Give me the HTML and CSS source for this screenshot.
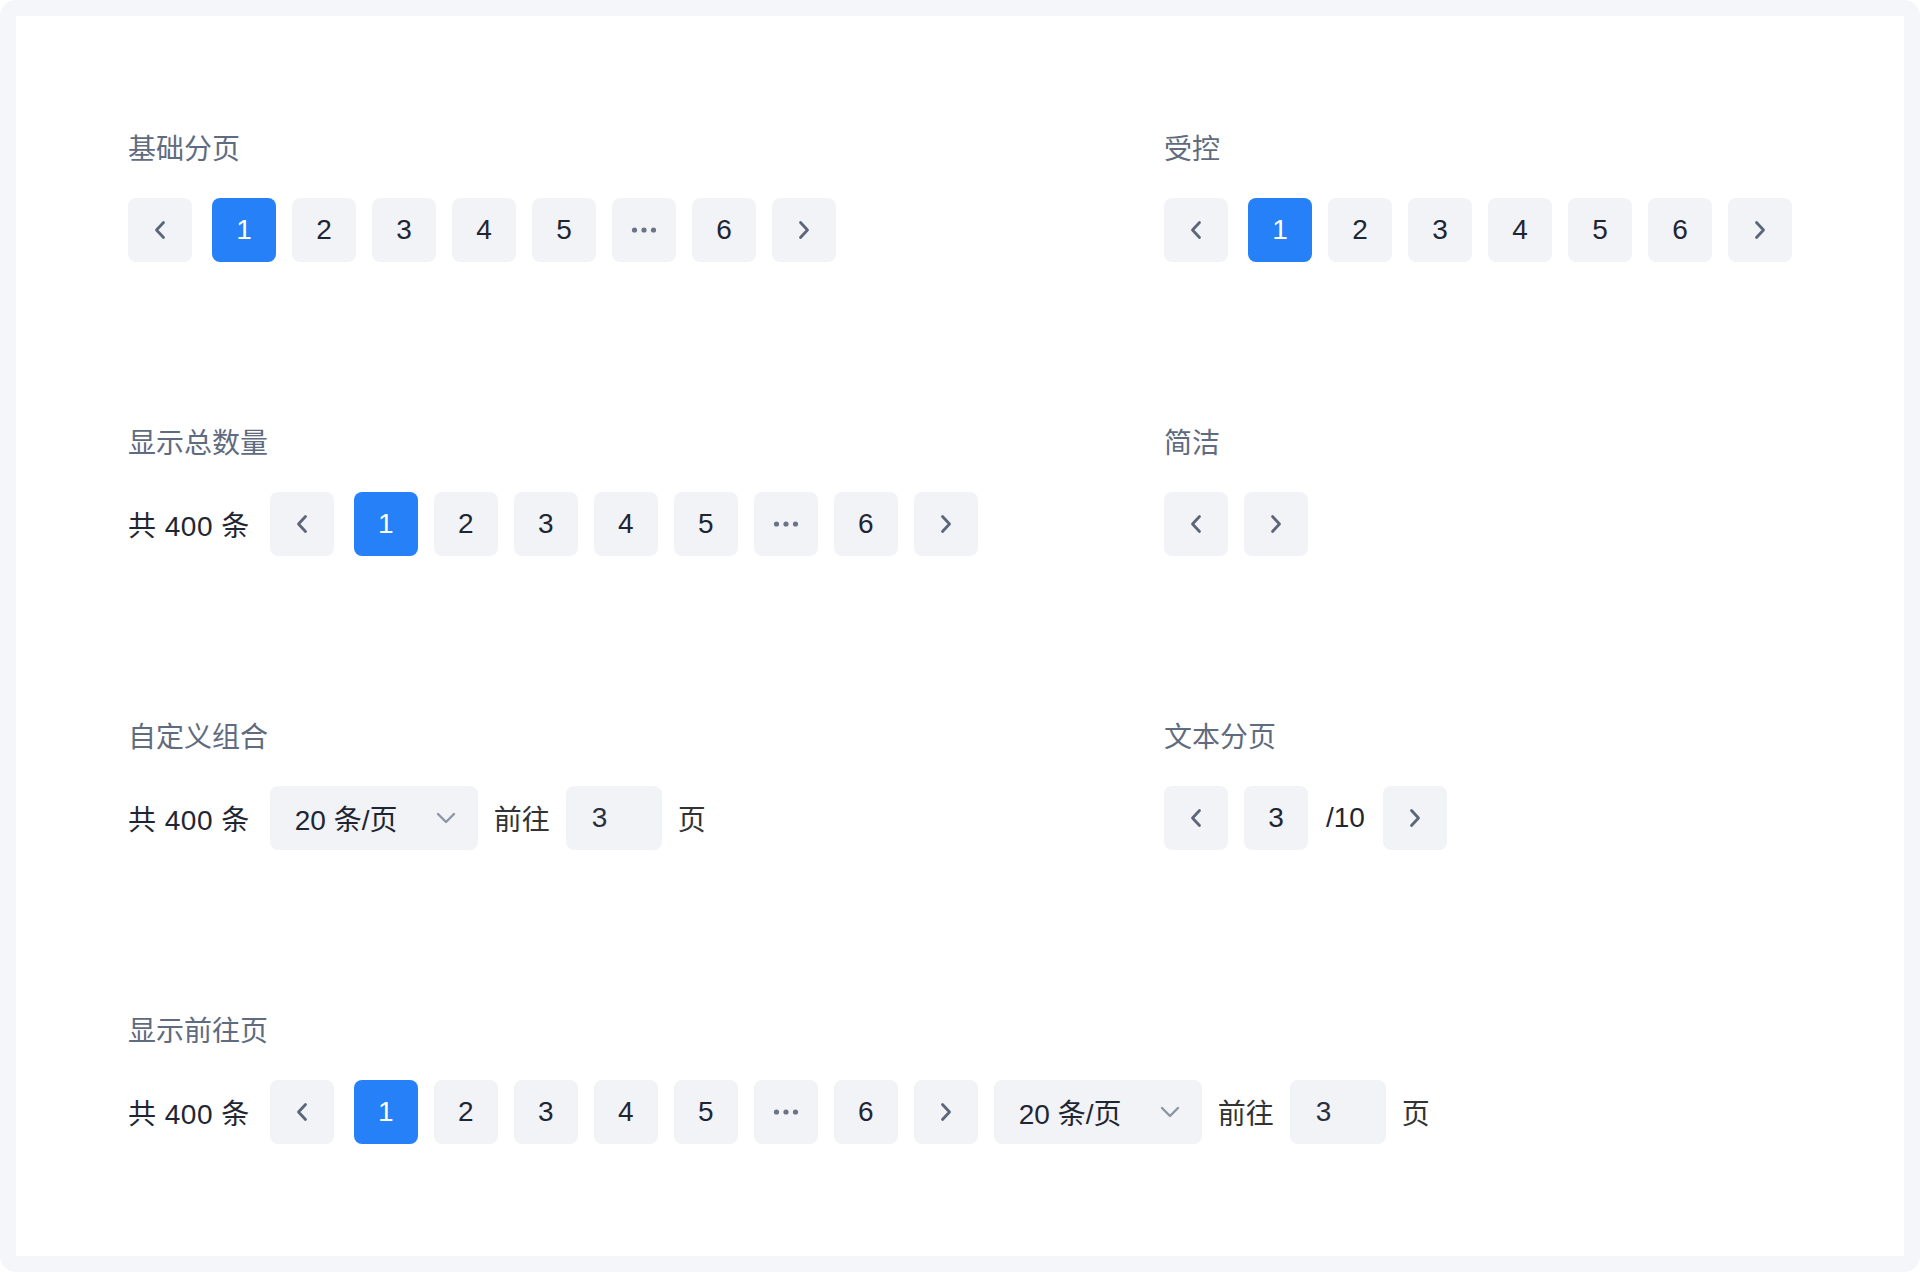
FILE: index.html
```html
<!DOCTYPE html>
<html lang="zh-CN">
<head>
<meta charset="utf-8">
<title>Pagination</title>
<link rel="stylesheet" href="styles.css">
</head>
<body>
<div class="frame">
  <div class="panel">
    <section class="demo">
      <h3 class="demo-title">基础分页</h3>
      <div class="pager">
        <button class="pg-btn pg-prev"><svg width="14" height="20" viewBox="0 0 14 20"><polyline points="10.5,2.5 3.5,10 10.5,17.5" /></svg></button>
        <button class="pg-btn active">1</button>
        <button class="pg-btn">2</button>
        <button class="pg-btn">3</button>
        <button class="pg-btn">4</button>
        <button class="pg-btn">5</button>
        <button class="pg-btn pg-more"><svg width="28" height="8" viewBox="0 0 28 8"><circle cx="4.5" cy="4" r="2.6"/><circle cx="14" cy="4" r="2.6"/><circle cx="23.5" cy="4" r="2.6"/></svg></button>
        <button class="pg-btn">6</button>
        <button class="pg-btn pg-next"><svg width="14" height="20" viewBox="0 0 14 20"><polyline points="3.5,2.5 10.5,10 3.5,17.5" /></svg></button>
      </div>
    </section>

    <section class="demo">
      <h3 class="demo-title">受控</h3>
      <div class="pager">
        <button class="pg-btn pg-prev"><svg width="14" height="20" viewBox="0 0 14 20"><polyline points="10.5,2.5 3.5,10 10.5,17.5" /></svg></button>
        <button class="pg-btn active">1</button>
        <button class="pg-btn">2</button>
        <button class="pg-btn">3</button>
        <button class="pg-btn">4</button>
        <button class="pg-btn">5</button>
        <button class="pg-btn">6</button>
        <button class="pg-btn pg-next"><svg width="14" height="20" viewBox="0 0 14 20"><polyline points="3.5,2.5 10.5,10 3.5,17.5" /></svg></button>
      </div>
    </section>

    <section class="demo">
      <h3 class="demo-title">显示总数量</h3>
      <div class="pager">
        <span class="pg-total">共 400 条</span>
        <button class="pg-btn pg-prev"><svg width="14" height="20" viewBox="0 0 14 20"><polyline points="10.5,2.5 3.5,10 10.5,17.5" /></svg></button>
        <button class="pg-btn active">1</button>
        <button class="pg-btn">2</button>
        <button class="pg-btn">3</button>
        <button class="pg-btn">4</button>
        <button class="pg-btn">5</button>
        <button class="pg-btn pg-more"><svg width="28" height="8" viewBox="0 0 28 8"><circle cx="4.5" cy="4" r="2.6"/><circle cx="14" cy="4" r="2.6"/><circle cx="23.5" cy="4" r="2.6"/></svg></button>
        <button class="pg-btn">6</button>
        <button class="pg-btn pg-next"><svg width="14" height="20" viewBox="0 0 14 20"><polyline points="3.5,2.5 10.5,10 3.5,17.5" /></svg></button>
      </div>
    </section>

    <section class="demo">
      <h3 class="demo-title">简洁</h3>
      <div class="pager">
        <button class="pg-btn pg-prev simple"><svg width="14" height="20" viewBox="0 0 14 20"><polyline points="10.5,2.5 3.5,10 10.5,17.5" /></svg></button>
        <button class="pg-btn pg-next"><svg width="14" height="20" viewBox="0 0 14 20"><polyline points="3.5,2.5 10.5,10 3.5,17.5" /></svg></button>
      </div>
    </section>

    <section class="demo">
      <h3 class="demo-title">自定义组合</h3>
      <div class="pager">
        <span class="pg-total">共 400 条</span>
        <div class="pg-select"><span>20 条/页</span><svg width="20" height="12" viewBox="0 0 20 12"><polyline points="2,2 10,10 18,2" /></svg></div>
        <span class="pg-label">前往</span>
        <div class="pg-input">3</div>
        <span class="pg-label">页</span>
      </div>
    </section>

    <section class="demo">
      <h3 class="demo-title">文本分页</h3>
      <div class="pager">
        <button class="pg-btn pg-prev simple"><svg width="14" height="20" viewBox="0 0 14 20"><polyline points="10.5,2.5 3.5,10 10.5,17.5" /></svg></button>
        <button class="pg-btn">3</button>
        <span class="pg-count">/10</span>
        <button class="pg-btn pg-next"><svg width="14" height="20" viewBox="0 0 14 20"><polyline points="3.5,2.5 10.5,10 3.5,17.5" /></svg></button>
      </div>
    </section>

    <section class="demo wide">
      <h3 class="demo-title">显示前往页</h3>
      <div class="pager">
        <span class="pg-total">共 400 条</span>
        <button class="pg-btn pg-prev"><svg width="14" height="20" viewBox="0 0 14 20"><polyline points="10.5,2.5 3.5,10 10.5,17.5" /></svg></button>
        <button class="pg-btn active">1</button>
        <button class="pg-btn">2</button>
        <button class="pg-btn">3</button>
        <button class="pg-btn">4</button>
        <button class="pg-btn">5</button>
        <button class="pg-btn pg-more"><svg width="28" height="8" viewBox="0 0 28 8"><circle cx="4.5" cy="4" r="2.6"/><circle cx="14" cy="4" r="2.6"/><circle cx="23.5" cy="4" r="2.6"/></svg></button>
        <button class="pg-btn">6</button>
        <button class="pg-btn pg-next"><svg width="14" height="20" viewBox="0 0 14 20"><polyline points="3.5,2.5 10.5,10 3.5,17.5" /></svg></button>
        <div class="pg-select"><span>20 条/页</span><svg width="20" height="12" viewBox="0 0 20 12"><polyline points="2,2 10,10 18,2" /></svg></div>
        <span class="pg-label">前往</span>
        <div class="pg-input">3</div>
        <span class="pg-label">页</span>
      </div>
    </section>
  </div>
</div>
</body>
</html>
```

FILE: styles.css
```css
* { box-sizing: border-box; }

html, body {
  margin: 0;
  padding: 0;
  background: #ffffff;
}

body {
  font-family: "Liberation Sans", "Noto Sans CJK SC", sans-serif;
  color: #1f2633;
}

.frame {
  width: 1920px;
  height: 1272px;
  background: #f5f6f9;
  border-radius: 16px;
  padding: 16px;
}

.panel {
  background: #ffffff;
  height: 100%;
  padding: 112px 112px;
  display: grid;
  grid-template-columns: 1036px 1fr;
  grid-auto-rows: 134px;
  row-gap: 160px;
}

.demo {
  display: flex;
  flex-direction: column;
}

.demo.wide {
  grid-column: 1 / -1;
}

.demo-title {
  margin: 0 0 32px 0;
  font-weight: 400;
  font-size: 28px;
  line-height: 38px;
  color: #5f6b7e;
  font-family: "Noto Sans CJK SC", sans-serif;
}

.pager {
  display: flex;
  align-items: center;
  gap: 16px;
  height: 64px;
}

.pg-btn {
  width: 64px;
  height: 64px;
  border: none;
  border-radius: 8px;
  background: #f2f3f7;
  color: #1f2633;
  font-family: "Liberation Sans", sans-serif;
  font-size: 28px;
  padding: 0;
  display: flex;
  align-items: center;
  justify-content: center;
  flex: none;
}

.pg-btn.active {
  background: #2681f9;
  color: #ffffff;
}

.pg-prev {
  margin-right: 4px;
}

.pg-prev.simple {
  margin-right: 0;
}

.pg-btn svg polyline {
  fill: none;
  stroke: #5b6679;
  stroke-width: 2.8;
  stroke-linecap: round;
  stroke-linejoin: round;
}

.pg-more svg circle {
  fill: #6b7486;
}

.pg-total {
  font-size: 28px;
  color: #1f2633;
  margin-right: 4px;
  letter-spacing: 0.5px;
  white-space: nowrap;
}

.pg-label {
  font-size: 28px;
  color: #333333;
  font-family: "Noto Sans CJK SC", sans-serif;
  white-space: nowrap;
}

.pg-select {
  width: 208px;
  height: 64px;
  border-radius: 8px;
  background: #f2f3f7;
  display: flex;
  align-items: center;
  justify-content: space-between;
  padding: 0 22px 0 25px;
  font-size: 28px;
  color: #1f2633;
  white-space: nowrap;
  flex: none;
}

.pg-select svg polyline {
  fill: none;
  stroke: #8c95a5;
  stroke-width: 2.4;
  stroke-linecap: round;
  stroke-linejoin: round;
}

.pg-input {
  width: 96px;
  height: 64px;
  border-radius: 8px;
  background: #f2f3f7;
  display: flex;
  align-items: center;
  padding-left: 26px;
  font-size: 28px;
  color: #2a3040;
  flex: none;
}

.pg-count {
  font-size: 28px;
  color: #1f2633;
  margin: 0 2px;
}
```
